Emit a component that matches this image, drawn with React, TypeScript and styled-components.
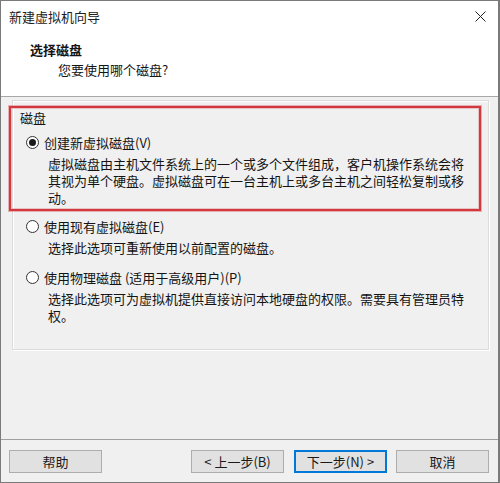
import React from 'react';
import styled, { createGlobalStyle } from 'styled-components';

const GlobalStyle = createGlobalStyle`
  html, body {
    margin: 0;
    padding: 0;
    background: #ffffff;
  }
  * {
    box-sizing: border-box;
  }
`;

const font = `'Noto Sans CJK SC', 'Noto Sans', sans-serif`;

const WindowFrame = styled.div`
  position: relative;
  width: 500px;
  height: 483px;
  display: flex;
  flex-direction: column;
  background: #f0f0f0;
  border: 1px solid #7a7a7a;
  border-right-width: 2px;
  font-family: ${font};
  font-size: 13px;
  color: #141414;
  overflow: hidden;
`;

const TitleBar = styled.div`
  height: 31px;
  display: flex;
  align-items: center;
  justify-content: space-between;
  padding: 0 12px 0 8px;
  background: #ffffff;
  font-size: 13px;
  color: #222;
`;

const Header = styled.div`
  height: 65px;
  display: flex;
  flex-direction: column;
  padding: 9px 0 0 29px;
  background: #ffffff;
  border-bottom: 1px solid #a8a8a8;
`;

const HeaderTitle = styled.div`
  font-weight: 700;
  line-height: 18px;
`;

const HeaderSub = styled.div`
  line-height: 18px;
  margin-top: 2px;
  padding-left: 28px;
`;

const Body = styled.div`
  position: relative;
  flex: 1;
  display: flex;
  flex-direction: column;
  padding: 3px 9px 0 11px;
`;

const GroupBox = styled.div`
  height: 250px;
  display: flex;
  flex-direction: column;
  padding: 8px 0 0 7px;
  border: 1px solid #dcdcdc;
  box-shadow: inset 1px 1px 0 #ffffff, 1px 1px 0 #ffffff;
`;

const GroupLabel = styled.div`
  line-height: 17px;
`;

const Option = styled.div<{ $gap: number }>`
  display: flex;
  flex-direction: column;
  margin-top: ${(p) => p.$gap}px;
`;

const RadioRow = styled.label`
  display: flex;
  align-items: center;
  gap: 5px;
  line-height: 17px;
  padding-left: 6px;
`;

const RadioCircle = styled.span<{ $checked?: boolean }>`
  width: 13px;
  height: 13px;
  border-radius: 50%;
  border: 1px solid #333;
  background: #ffffff;
  display: inline-flex;
  align-items: center;
  justify-content: center;

  &::after {
    content: '';
    width: 7px;
    height: 7px;
    border-radius: 50%;
    background: ${(p) => (p.$checked ? '#1a1a1a' : 'transparent')};
  }
`;

const Description = styled.div`
  margin-top: 4px;
  padding-left: 28px;
  padding-right: 20px;
  line-height: 17px;
`;

const Highlight = styled.div`
  position: absolute;
  left: 8px;
  top: 9px;
  width: 472px;
  height: 105px;
  border: 2px solid #d3383f;
  box-shadow: 0 0 0 1px rgba(211, 56, 63, 0.35), inset 0 0 0 1px rgba(211, 56, 63, 0.25);
  pointer-events: none;
`;

const Footer = styled.div`
  height: 43px;
  display: flex;
  align-items: center;
  padding: 0 9px 0 8px;
  border-top: 1px solid #a0a0a0;
`;

const Spacer = styled.div`
  flex: 1;
`;

const Button = styled.button<{ $default?: boolean; $gap?: number }>`
  width: 93px;
  height: 23px;
  margin-left: ${(p) => p.$gap ?? 0}px;
  padding: 0;
  font-family: ${font};
  font-size: 13px;
  color: #1a1a1a;
  background: #e1e1e1;
  border: ${(p) => (p.$default ? '2px solid #0078d7' : '1px solid #adadad')};
`;

const CloseIcon = () => (
  <svg width="11" height="11" viewBox="0 0 11 11">
    <path d="M0.5 0.5 L10.5 10.5 M10.5 0.5 L0.5 10.5" stroke="#222" strokeWidth="1" />
  </svg>
);

export default function App() {
  return (
    <>
      <GlobalStyle />
      <WindowFrame>
        <TitleBar>
          <span>新建虚拟机向导</span>
          <CloseIcon />
        </TitleBar>
        <Header>
          <HeaderTitle>选择磁盘</HeaderTitle>
          <HeaderSub>您要使用哪个磁盘?</HeaderSub>
        </Header>
        <Body>
          <GroupBox>
            <GroupLabel>磁盘</GroupLabel>
            <Option $gap={8}>
              <RadioRow>
                <RadioCircle $checked />
                创建新虚拟磁盘(V)
              </RadioRow>
              <Description>
                虚拟磁盘由主机文件系统上的一个或多个文件组成，客户机操作系统会将其视为单个硬盘。虚拟磁盘可在一台主机上或多台主机之间轻松复制或移动。
              </Description>
            </Option>
            <Option $gap={12}>
              <RadioRow>
                <RadioCircle />
                使用现有虚拟磁盘(E)
              </RadioRow>
              <Description>选择此选项可重新使用以前配置的磁盘。</Description>
            </Option>
            <Option $gap={13}>
              <RadioRow>
                <RadioCircle />
                使用物理磁盘 (适用于高级用户)(P)
              </RadioRow>
              <Description>
                选择此选项可为虚拟机提供直接访问本地硬盘的权限。需要具有管理员特权。
              </Description>
            </Option>
          </GroupBox>
          <Highlight />
        </Body>
        <Footer>
          <Button>帮助</Button>
          <Spacer />
          <Button>&lt; 上一步(B)</Button>
          <Button $default $gap={10}>下一步(N) &gt;</Button>
          <Button $gap={9}>取消</Button>
        </Footer>
      </WindowFrame>
    </>
  );
}
